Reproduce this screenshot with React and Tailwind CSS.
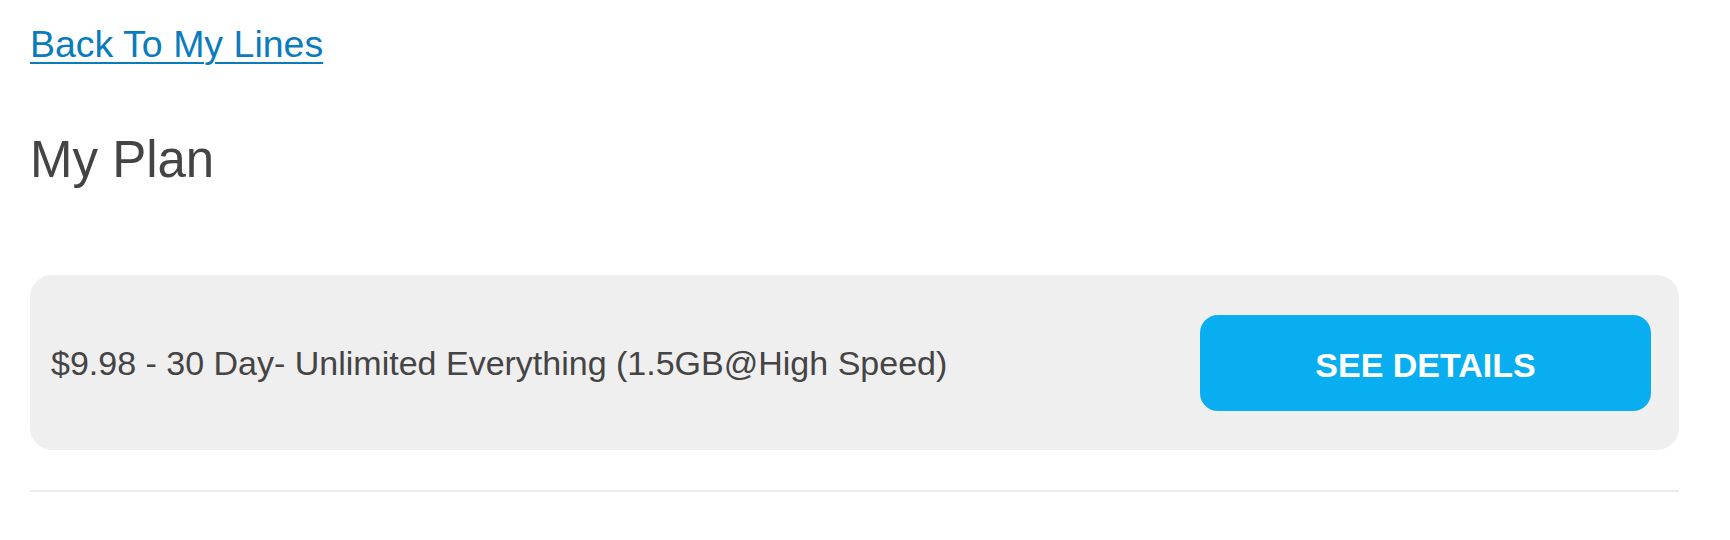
export default function App() {
    return (
        <div className="min-h-[540px] bg-white pl-[30px] pr-[51px] pt-[26px] font-['Liberation_Sans',Arial,sans-serif]">
            {/* Back link */}
            <div className="h-[36px]">
                <a href="#" className="text-[37.5px] leading-[36px] text-[#0a7cbe] underline decoration-2 underline-offset-[5px]">Back To My Lines</a>
            </div>

            <h1 className="mt-[73px] text-[51px] leading-[50px] text-[#444444] font-normal">My Plan</h1>

            {/* Plan card */}
            <div className="mt-[90px] h-[175px] rounded-[22px] bg-[#efefef] flex items-center justify-between pl-[21px] pr-[28px]">
                <p className="text-[34px] leading-[40px] text-[#444444]">$9.98 - 30 Day- Unlimited Everything (1.5GB@High Speed)</p>
                <button className="w-[451px] h-[96px] rounded-[18px] bg-[#08aeef] text-white text-[34px] font-bold leading-none pt-[4px]">SEE DETAILS</button>
            </div>

            <div className="mt-[40px] h-[2px] bg-[#ebebeb]"></div>
        </div>
    )
}
